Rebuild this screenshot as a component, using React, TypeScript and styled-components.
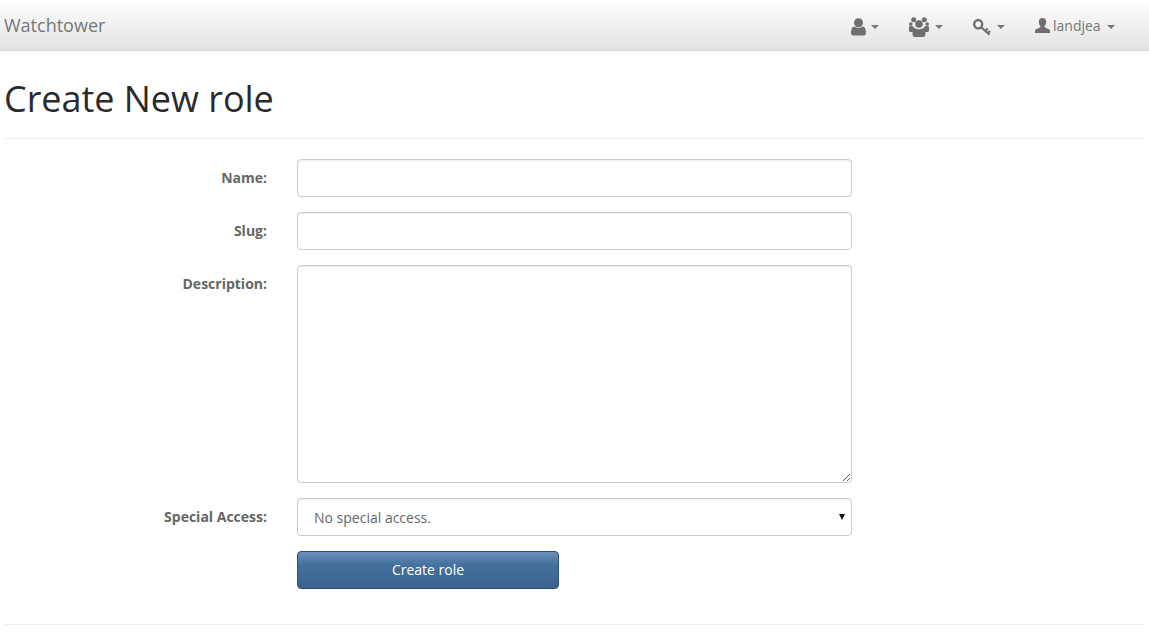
import React from 'react';
import styled, { createGlobalStyle } from 'styled-components';

const GlobalStyle = createGlobalStyle`
  html, body {
    margin: 0;
    padding: 0;
    background: #fff;
  }
  body {
    font-family: "Open Sans", "Liberation Sans", sans-serif;
    font-size: 14px;
    color: #555;
  }
`;

const Navbar = styled.nav`
  display: flex;
  align-items: center;
  justify-content: space-between;
  height: 50px;
  box-sizing: content-box;
  border-bottom: 1px solid #d4d4d4;
  background: linear-gradient(to bottom, #ffffff 0%, #e2e2e2 100%);
  padding-left: 4px;
`;

const Brand = styled.a`
  font-size: 18px;
  color: #777;
`;

const NavItems = styled.div`
  display: flex;
  align-items: center;
  padding-right: 34px;
`;

const NavItem = styled.a<{ $width: number }>`
  display: flex;
  align-items: center;
  width: ${(p) => p.$width}px;
  color: #777;
  font-size: 14px;
`;

const Caret = styled.span<{ $gap?: number }>`
  display: inline-block;
  width: 0;
  height: 0;
  margin-left: ${(p) => p.$gap ?? 6}px;
  margin-top: 4px;
  border-top: 4px solid #777;
  border-left: 4px solid transparent;
  border-right: 4px solid transparent;
`;

const NavIcon = styled.svg<{ $drop: number }>`
  display: block;
  margin-top: ${(p) => p.$drop}px;
  fill: #6f6f6f;
`;

const KeyGlyph = styled(NavIcon)`
  fill: none;
  stroke: #6f6f6f;
`;

const UserName = styled.span`
  margin-left: 3px;
`;

const Page = styled.main`
  padding: 0 5px;
`;

const Title = styled.h1`
  margin: 0;
  padding: 27px 0 18px;
  border-bottom: 1px solid #eee;
  font-size: 36px;
  font-weight: 400;
  line-height: 42px;
  letter-spacing: -0.03px;
  text-indent: -1px;
  color: #2a2a2a;
`;

const Form = styled.form`
  display: grid;
  grid-template-columns: 262px 555px;
  column-gap: 30px;
  row-gap: 15px;
  padding: 20px 0 35px;
  border-bottom: 1px solid #eee;
`;

const Label = styled.label`
  padding-top: 9px;
  text-align: right;
  font-weight: 700;
  line-height: 20px;
  color: #666;
`;

const TextInput = styled.input`
  display: block;
  box-sizing: border-box;
  width: 100%;
  height: 38px;
  border: 1px solid #ccc;
  border-radius: 4px;
  background: #fff;
  box-shadow: inset 0 1px 1px rgba(0, 0, 0, 0.075);
  outline: none;
`;

const TextArea = styled.textarea`
  display: block;
  box-sizing: border-box;
  width: 100%;
  height: 218px;
  border: 1px solid #ccc;
  border-radius: 4px;
  background: #fff;
  box-shadow: inset 0 1px 1px rgba(0, 0, 0, 0.075);
  outline: none;
`;

const SelectWrap = styled.div`
  position: relative;

  &::after {
    content: '';
    position: absolute;
    top: 16px;
    right: 7px;
    width: 0;
    height: 0;
    border-top: 6px solid #111;
    border-left: 3px solid transparent;
    border-right: 3px solid transparent;
    pointer-events: none;
  }
`;

const SelectBox = styled.select`
  display: block;
  box-sizing: border-box;
  width: 100%;
  height: 38px;
  padding: 0 16px;
  border: 1px solid #ccc;
  border-radius: 4px;
  background: #fff;
  box-shadow: inset 0 1px 1px rgba(0, 0, 0, 0.075);
  appearance: none;
  font-family: inherit;
  font-size: 14px;
  color: #666;
  outline: none;
`;

const ButtonCell = styled.div`
  grid-column: 2;
`;

const SubmitButton = styled.button`
  display: block;
  box-sizing: border-box;
  width: 262px;
  height: 38px;
  padding: 0 6px 2px;
  border: 1px solid #2f4f78;
  border-radius: 4px;
  background: linear-gradient(to bottom, #6a90bb 0%, #44719d 35%, #3c628f 100%);
  font-family: inherit;
  font-size: 14px;
  color: #fff;
`;

const PersonIcon = () => (
  <NavIcon $drop={4} width="15" height="18" viewBox="0 0 15 18">
    <circle cx="7.5" cy="4.8" r="4.5" />
    <path d="M0 15c0-3.800 1-6.200 3.400-6.500 1 .9 2.500 1.400 4.100 1.400s3.100-.5 4.100-1.400c2.400.3 3.400 2.700 3.400 6.500 0 1.500-.9 2.500-2.200 2.500H2.200C.9 17.500 0 16.500 0 15z" />
  </NavIcon>
);

const GroupIcon = () => (
  <NavIcon $drop={4} width="20" height="20" viewBox="0 0 20 20">
    <circle cx="4.700" cy="2.700" r="2.500" />
    <circle cx="15.300" cy="2.700" r="2.500" />
    <circle cx="1.800" cy="7" r="1.800" />
    <circle cx="18.200" cy="7" r="1.800" />
    <circle cx="10" cy="7" r="3.800" />
    <path d="M0 11c0-1.500.5-2.400 1.500-2.400.7.500 1.200.7 2 .7.300 0 .6 0 .8-.1.400 1 .9 1.900 1.700 2.500-1 .5-1.700 1.600-2 3.300H1.300C.5 15 0 14.400 0 13.500z" />
    <path d="M20 11c0-1.500-.5-2.400-1.500-2.400-.7.500-1.200.7-2 .7-.3 0-.6 0-.8-.1-.4 1-.9 1.900-1.700 2.500 1 .5 1.700 1.600 2 3.300h2.700c.8 0 1.300-.6 1.300-1.500z" />
    <path d="M3.500 17c0-3.500 1-5.500 3-5.700.9.700 2.200 1.200 3.500 1.200s2.600-.5 3.500-1.200c2 .2 3 2.200 3 5.700 0 1.600-.9 3-2.200 3H5.700c-1.300 0-2.200-1.400-2.200-3z" />
  </NavIcon>
);

const KeyIcon = () => (
  <KeyGlyph $drop={4} width="18" height="18" viewBox="0 0 18 18">
    <ellipse cx="5.200" cy="6.200" rx="4" ry="4.200" strokeWidth="2.400" />
    <path d="M8 9 L16.500 16.800 M12.300 13 L14.600 10.600 M14.800 15.300 L17 13" strokeWidth="2.200" />
  </KeyGlyph>
);

const SlimUserIcon = () => (
  <NavIcon $drop={1} width="15" height="15" viewBox="0 0 15 15">
    <path d="M7.500 0c2.300 0 3.700 1.500 3.700 3.800 0 1.700-.7 3.300-1.500 4.200-.4.500-.3 1.100.3 1.400 1.900.8 5 1.700 5 3.600v2H0v-2c0-1.900 3.100-2.800 5-3.600.6-.3.700-.9.300-1.400-.8-.9-1.500-2.500-1.500-4.200C3.800 1.500 5.200 0 7.500 0z" />
  </NavIcon>
);

export default function App() {
  return (
    <>
      <GlobalStyle />
      <Navbar>
        <Brand>Watchtower</Brand>
        <NavItems>
          <NavItem $width={58}>
            <PersonIcon />
            <Caret $gap={5} />
          </NavItem>
          <NavItem $width={64}>
            <GroupIcon />
            <Caret />
          </NavItem>
          <NavItem $width={62}>
            <KeyIcon />
            <Caret />
          </NavItem>
          <NavItem $width={80}>
            <SlimUserIcon />
            <UserName>landjea</UserName>
            <Caret />
          </NavItem>
        </NavItems>
      </Navbar>
      <Page>
        <Title>Create New role</Title>
        <Form>
          <Label>Name:</Label>
          <TextInput type="text" />
          <Label>Slug:</Label>
          <TextInput type="text" />
          <Label>Description:</Label>
          <TextArea />
          <Label>Special Access:</Label>
          <SelectWrap>
            <SelectBox>
              <option>No special access.</option>
            </SelectBox>
          </SelectWrap>
          <ButtonCell>
            <SubmitButton type="button">Create role</SubmitButton>
          </ButtonCell>
        </Form>
      </Page>
    </>
  );
}
